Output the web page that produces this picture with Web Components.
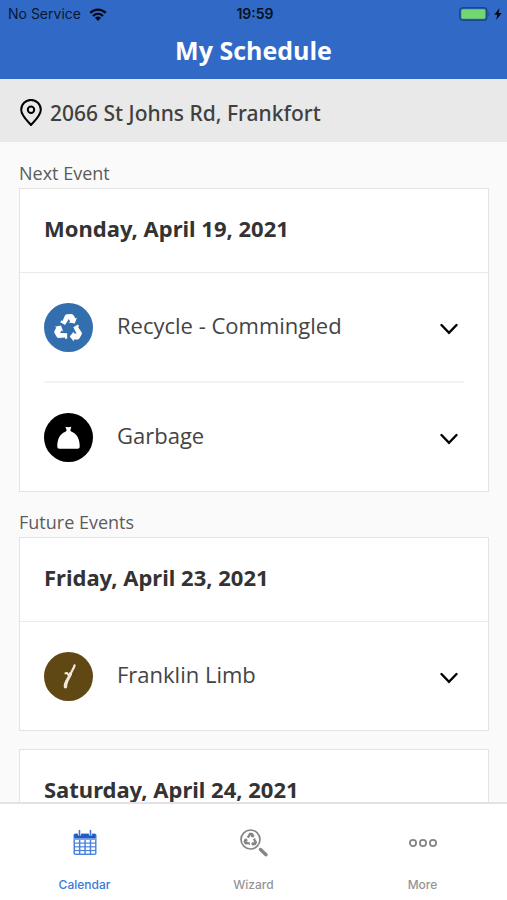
<!DOCTYPE html>
<html lang="en">
<head>
<meta charset="utf-8">
<meta name="viewport" content="width=device-width, initial-scale=1">
<title>My Schedule</title>
<style>
  html, body { margin: 0; height: 100%; }
  body { font-family: "Open Sans", "Noto Sans", sans-serif; color: #333; background: #fafafa; }
</style>
</head>
<body>
<schedule-app>
  <status-bar slot="top"></status-bar>
  <title-bar slot="top">My Schedule</title-bar>
  <address-bar slot="top">2066 St Johns Rd, Frankfort</address-bar>

  <event-section>
    <span slot="label">Next Event</span>
    <event-card>
      <span slot="date">Monday, April 19, 2021</span>
      <event-row icon="recycle">Recycle - Commingled</event-row>
      <event-row icon="garbage">Garbage</event-row>
    </event-card>
  </event-section>
  <event-section>
    <span slot="label">Future Events</span>
    <event-card>
      <span slot="date">Friday, April 23, 2021</span>
      <event-row icon="limb">Franklin Limb</event-row>
    </event-card>
    <event-card>
      <span slot="date">Saturday, April 24, 2021</span>
    </event-card>
  </event-section>

  <tab-bar slot="bottom">
    <tab-item icon="calendar" active>Calendar</tab-item>
    <tab-item icon="wizard">Wizard</tab-item>
    <tab-item icon="more">More</tab-item>
  </tab-bar>
</schedule-app>

<script>
const arm = 'M1.200 7.800 5.200 3V4.900H7.900L4.700-1.200 9.300-3.900 10.400-2 9.300-1.400 13 3.800Q13.400 4.800 12.900 5.800L10.800 9.500Q10 10.800 8.400 10.800H5.200V12.600Z';
const recycle = [0, 120, 240].map(a => `<path d="${arm}" transform="rotate(${a})"/>`).join('');

const icons = {
  recycle: `<svg viewBox="0 0 48 48"><g transform="translate(24 25)" fill="#fff">${recycle}</g></svg>`,
  garbage: `<svg viewBox="0 0 48 48"><path fill="#fff" d="M21 13.4q3 .9 5.800 0l-1 3.600q.2 1 1.700 1.600c4.500 1.700 7.500 6.400 7.500 14.400q0 2-2 2H15q-2 0-2-2c0-8 3-12.700 7.500-14.400q1.500-.6 1.700-1.600z"/></svg>`,
  limb: `<svg viewBox="0 0 48 48" fill="none" stroke="#efe9dc" stroke-linecap="round" stroke-linejoin="round"><path stroke-width="2.200" d="M30 13c-.6 3-3 5.500-4 9"/><path stroke-width="3" d="M26 21c-.6 3-3.200 6-4 8.500"/><path stroke-width="3.400" d="M22 29.500c-1 1.500-1 3-1 4.500"/><path stroke-width="2" d="M25 24l-2.500-3.500-1.500.3"/></svg>`,
  calendar: `<svg viewBox="0 0 28 28"><rect x="2.500" y="4.500" width="23" height="21.500" rx="1.800" fill="#4c82dc"/><path fill="#215ac4" d="M3.500 5h21v4.500h-21z"/><path stroke="#a9c4f3" stroke-width="1" d="M3 10h22"/><g fill="#fff">${[11, 14.7, 18.4, 22.1].map(y => [4, 9.4, 14.8, 20.2].map(x => `<rect x="${x}" y="${y}" width="3.900" height="2.500"/>`).join('')).join('')}</g><path fill="none" stroke="#fff" stroke-width="3.200" d="M8.500 3.500v3M19.500 3.500v3"/><path fill="none" stroke="#3c74d6" stroke-width="1.600" stroke-linecap="round" d="M8.500 1.500v5M19.500 1.500v5"/></svg>`,
  wizard: `<svg viewBox="0 0 28 28"><circle cx="10.500" cy="10.500" r="9.500" fill="none" stroke="#858585" stroke-width="1.700"/><g fill="#858585" transform="translate(10.500 10.900) scale(.5)">${recycle}</g><path stroke="#858585" stroke-width="3.400" stroke-linecap="round" d="M20.500 20.500l5.500 5.200"/></svg>`,
  more: `<svg viewBox="0 0 28 28" fill="none" stroke="#858585" stroke-width="1.800"><circle cx="4" cy="14" r="3.100"/><circle cx="14" cy="14" r="3.100"/><circle cx="24" cy="14" r="3.100"/></svg>`
};

function define(name, html) {
  customElements.define(name, class extends HTMLElement {
    connectedCallback() {
      if (this.shadowRoot) return;
      this.attachShadow({ mode: 'open' }).innerHTML = typeof html === 'function' ? html(this) : html;
    }
  });
}

define('schedule-app', `
  <style>
    :host { display: flex; flex-direction: column; height: 100vh; }
    main { flex: 1; min-height: 0; overflow: hidden; padding: 16px 18px 0 19px; }
  </style>
  <header><slot name="top"></slot></header>
  <main><slot></slot></main>
  <slot name="bottom"></slot>`);

define('status-bar', `
  <style>
    :host { display: grid; grid-template-columns: 1fr auto 1fr; align-items: center; height: 28px; padding: 0 5px 0 8px;
      box-sizing: border-box; background: #316ac6; color: #0a1730; font: 14px/28px Inter, sans-serif; }
    div { display: flex; align-items: center; gap: 8px; }
    time { font-weight: 600; color: #06101f; }
    .right { justify-content: flex-end; gap: 3px; }
    svg { display: block; }
  </style>
  <div>No Service
    <svg width="18" height="13" viewBox="0 0 18 13" fill="none" stroke="#050b16" stroke-width="2.300"><path d="M1.200 4.900c4.600-4.300 11-4.300 15.600 0M4 8c3-2.800 7-2.800 10 0"/><path fill="#050b16" stroke="none" d="M5.900 9.800q3.100-2.600 6.200 0L9 13z"/></svg>
  </div>
  <time>19:59</time>
  <div class="right">
    <svg width="32" height="14" viewBox="0 0 32 14"><rect x=".8" y=".8" width="27" height="12.400" rx="3" fill="none" stroke="#1f4684" stroke-width="1.400"/><rect x="2.300" y="2.300" width="24" height="9.400" rx="1.500" fill="#71d871"/><path fill="#1f4684" d="M29.500 4.500q2 2.500 0 5z"/></svg>
    <svg width="8" height="12" viewBox="0 0 8 12"><path fill="#050b16" d="M5.600 0 .3 6.800h3L2.200 12 7.700 5H4.600z"/></svg>
  </div>`);

define('title-bar', `
  <style>
    :host { display: block; background: #316ac6; color: #fff; height: 51px; }
    h1 { margin: 0; text-align: center; font-size: 25px; line-height: 44px; font-weight: 700; }
  </style>
  <h1><slot></slot></h1>`);

define('address-bar', `
  <style>
    :host { display: flex; align-items: center; gap: 8px; height: 63px; box-sizing: border-box; padding: 4px 20px 0; background: #e9e9e9;
      color: #404040; font: 500 21px/28px "Noto Sans", sans-serif; }
    svg { flex: none; }
  </style>
  <svg width="22" height="28" viewBox="0 0 22 28" fill="none" stroke="#000" stroke-width="2"><path stroke-linejoin="round" d="M11 26C7.500 22 1.200 16.500 1.200 10.700a9.800 9.800 0 0 1 19.600 0c0 5.800-6.300 11.300-9.800 15.300z"/><circle cx="11" cy="10.700" r="3.200"/></svg>
  <span><slot></slot></span>`);

define('event-section', `
  <style>
    :host { display: block; margin-bottom: 15px; }
    h2 { margin: 0; font-size: 18px; line-height: 30px; font-weight: 400; color: #5c5c5c; }
    div { display: grid; gap: 18px; }
  </style>
  <h2><slot name="label"></slot></h2>
  <div><slot></slot></div>`);

define('event-card', `
  <style>
    :host { display: block; background: #fff; border: 1px solid #e4e4e4; }
    h3 { margin: 0; padding: 20px 24px 24px; border-bottom: 1px solid #eaeaea; font: 700 22px/39px "Noto Sans", sans-serif; color: #333; }
    ::slotted(event-row:not(:last-child)) { border-bottom: 2px solid #f3f3f3; }
  </style>
  <h3><slot name="date"></slot></h3>
  <slot></slot>`);

define('event-row', el => `
  <style>
    :host { display: block; margin: 0 24px; }
    button { display: flex; align-items: center; gap: 24px; width: 100%; height: 108px; padding: 0; border: 0; background: none;
      font: inherit; color: #444; font-size: 22px; line-height: 32px; text-align: left; cursor: pointer; }
    .badge { flex: none; width: 49px; height: 49px; border-radius: 50%; }
    .badge svg { display: block; width: 100%; height: 100%; }
    .recycle { background: #336fae; }
    .garbage { background: #000; }
    .limb { background: #604815; }
    .name { flex: 1; padding-bottom: 5px; }
    .chevron { flex: none; margin: 3px 6px 0 0; }
  </style>
  <button type="button" aria-expanded="false">
    <span class="badge ${el.getAttribute('icon')}">${icons[el.getAttribute('icon')]}</span>
    <span class="name"><slot></slot></span>
    <svg class="chevron" width="18" height="12" viewBox="0 0 18 12" fill="none" stroke="#000" stroke-width="2.400"><path stroke-linecap="round" d="M1.500 2 9 9.800 16.500 2"/></svg>
  </button>`);

define('tab-bar', `
  <style>
    :host { display: block; background: #fff; border-top: 2px solid #e2e2e2; }
    nav { display: grid; grid-template-columns: repeat(3, 1fr); height: 96px; }
  </style>
  <nav><slot></slot></nav>`);

define('tab-item', el => `
  <style>
    :host { display: block; color: #959595; }
    :host([active]) { color: #3e77d8; }
    a { display: flex; flex-direction: column; align-items: center; gap: 16px; padding-top: 25px; color: inherit; text-decoration: none;
      font: 500 12px/24px Inter, sans-serif; }
    svg { display: block; width: 28px; height: 28px; }
  </style>
  <a href="#${el.getAttribute('icon')}">${icons[el.getAttribute('icon')]}<span><slot></slot></span></a>`);
</script>
</body>
</html>
